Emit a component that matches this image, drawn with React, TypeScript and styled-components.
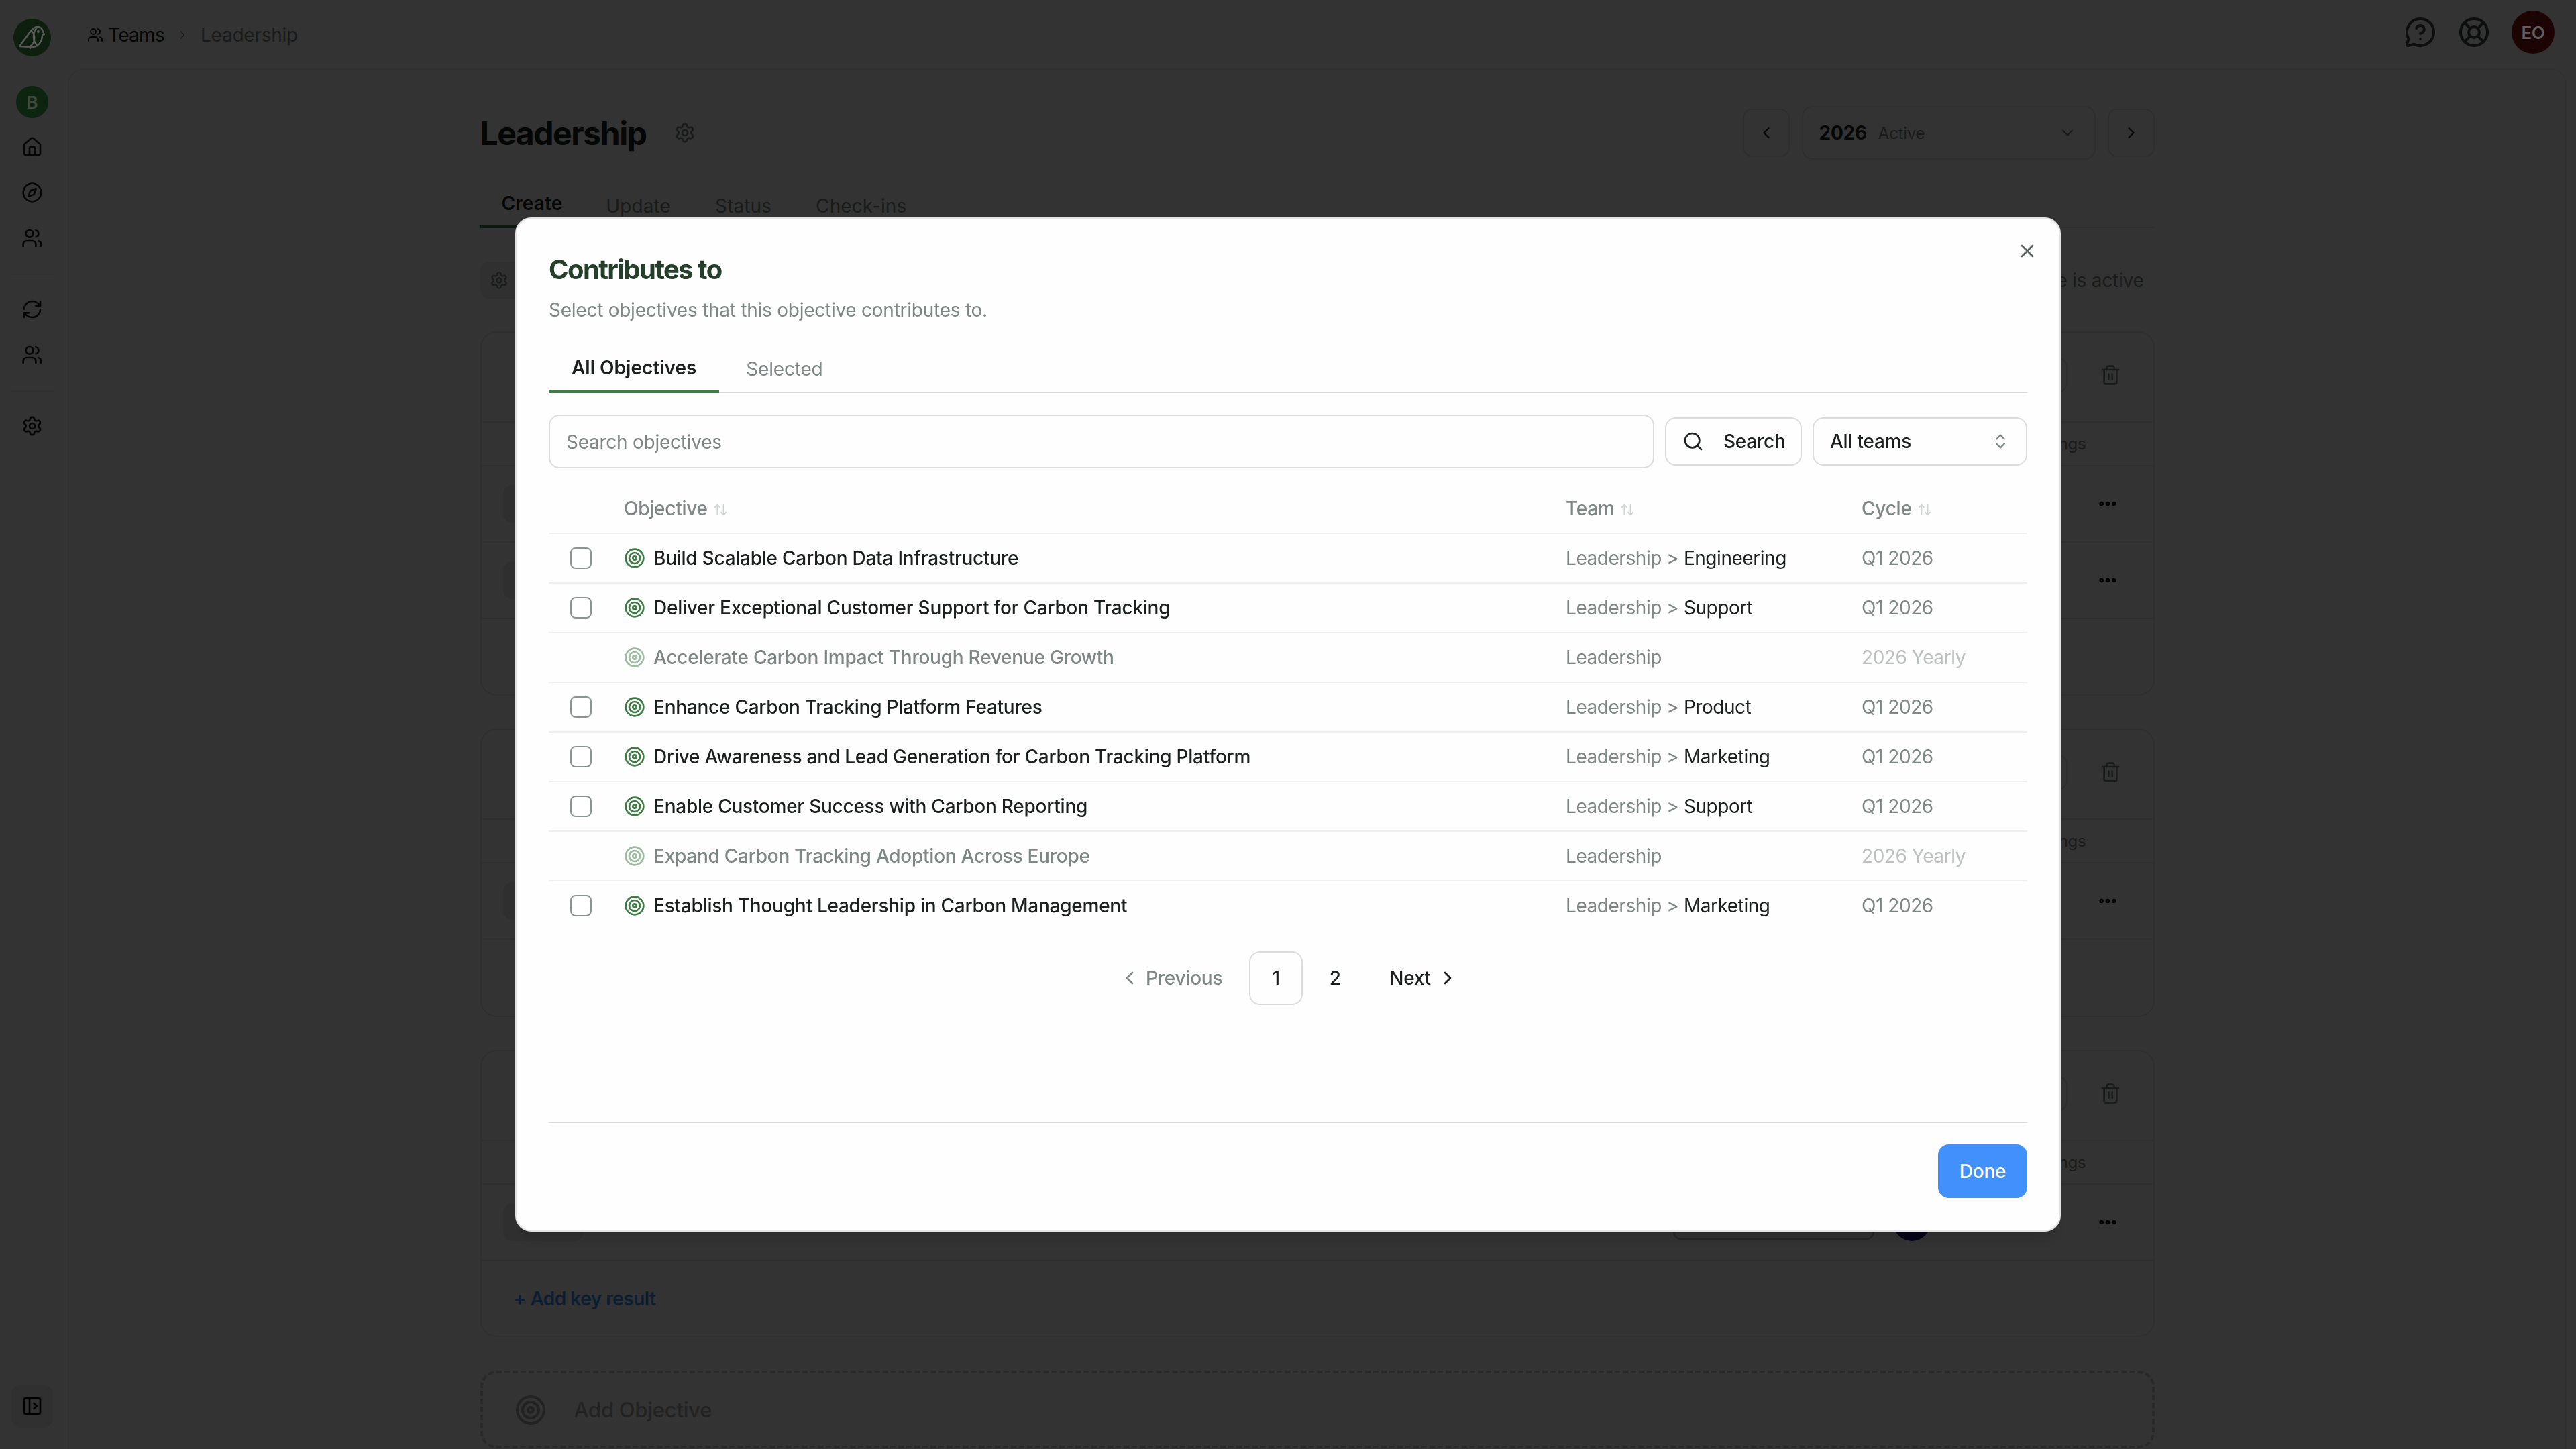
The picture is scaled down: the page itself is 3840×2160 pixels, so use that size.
import React from "react";
import styled, { createGlobalStyle } from "styled-components";
import {
  ArrowUpDown, ChevronDown, ChevronLeft, ChevronRight, ChevronsUpDown, Compass, Ellipsis, House,
  LifeBuoy, MessageCircleQuestion, PanelLeftOpen, RefreshCw, Search, Settings, Target, Trash2, Users, X,
} from "lucide-react";

const DARK = "#1b201f";
const GRAY = "#7e8785";
const LINE = "#e4e4e4";
const GREEN = "#3d7c42";

const Global = createGlobalStyle`
  html, body { margin: 0; padding: 0; background: #fff; }
  body { font-family: Inter, "Liberation Sans", sans-serif; color: ${DARK}; overflow: hidden; width: 3840px; height: 2160px; letter-spacing: -0.25px; }
  * { box-sizing: border-box; }
  svg { display: block; flex: none; }
`;

const Shell = styled.div`display: flex; width: 3840px; height: 2160px; overflow: hidden;`;

const Sidebar = styled.aside`
  width: 101px; flex: none; display: flex; flex-direction: column; align-items: center; padding: 28px 5px 0 0;
`;
const LogoMark = styled.div`
  position: relative; z-index: 20; width: 56px; height: 56px; border-radius: 50%; background: #0f1f0f;
`;
const TeamBadge = styled.div`
  position: relative; z-index: 20; width: 48px; height: 48px; margin-top: 44px; margin-bottom: 9px; border-radius: 50%;
  background: #0c2410; color: #3f4a3f; display: flex; align-items: center; justify-content: center;
  font-size: 26px; font-weight: 600;
`;
const NavItem = styled.div`height: 68px; display: flex; align-items: center; justify-content: center; width: 100%;`;
const NavDivider = styled.div`width: 64px; height: 2px; background: #ededed; margin: 19px 0 17px;`;
const Collapse = styled.div`
  margin-top: auto; margin-bottom: 32px; width: 62px; height: 64px; border-radius: 14px; background: #efefef;
  display: flex; align-items: center; justify-content: center;
`;

const Main = styled.div`flex: 1; min-width: 0; display: flex; flex-direction: column;`;
const TopBar = styled.header`
  height: 102px; flex: none; display: flex; align-items: center; justify-content: space-between;
  padding: 0 32px 6px 29px;
`;
const Crumbs = styled.nav`display: flex; align-items: center; font-size: 28px; margin-top: 8px;`;
const CrumbRoot = styled.span`display: flex; align-items: center; gap: 7px; color: ${DARK}; letter-spacing: -0.7px;`;
const CrumbSep = styled.span`margin: 0 17px; color: ${GRAY}; display: flex;`;
const CrumbLeaf = styled.span`color: ${GRAY};`;
const TopActions = styled.div`display: flex; align-items: center; gap: 32px; color: #44494a;`;
const UserBadge = styled.div`
  position: relative; z-index: 20; width: 64px; height: 64px; border-radius: 50%; background: #1c0404; color: #5f5f5f;
  display: flex; align-items: center; justify-content: center; font-size: 26px; font-weight: 600;
`;

const Panel = styled.main`
  flex: 1; min-height: 0; margin-right: 14px; border: 2px solid #f0f0f0; border-bottom: none;
  border-radius: 24px 24px 0 0; padding-top: 54px; display: flex; flex-direction: column; align-items: center; overflow: hidden;
`;
const Content = styled.div`width: 2496px; flex: none;`;
const PageHead = styled.div`display: flex; align-items: center; justify-content: space-between; height: 80px;`;
const TitleGroup = styled.div`display: flex; align-items: center; gap: 41px;`;
const PageTitle = styled.h1`margin: 0; font-size: 48px; font-weight: 700; letter-spacing: -0.03em; color: ${DARK};`;
const CycleNav = styled.div`display: flex; align-items: center; gap: 18px;`;
const CycleStep = styled.div`
  width: 70px; height: 72px; border: 2px solid ${LINE}; border-radius: 14px; display: flex; align-items: center; justify-content: center;
`;
const CycleSelect = styled.div`
  width: 438px; height: 80px; border: 2px solid ${LINE}; border-radius: 16px; display: flex; align-items: center;
  padding: 0 26px 0 24px; color: ${GRAY};
`;
const CycleYear = styled.span`font-size: 28px; font-weight: 700; color: ${DARK}; margin-right: 17px;`;
const CycleState = styled.span`font-size: 24px; flex: 1;`;
const PageTabs = styled.div`display: flex; margin-top: 30px; box-shadow: inset 0 -2px 0 ${LINE};`;
const PageTab = styled.div<{ $active?: boolean }>`
  height: 72px; padding: ${(p) => (p.$active ? "2px 32px 0" : "6px 33px 0")}; display: flex; align-items: center; font-size: 28px;
  letter-spacing: 0.1px;
  font-weight: ${(p) => (p.$active ? 600 : 400)}; color: ${(p) => (p.$active ? DARK : GRAY)};
  border-bottom: ${(p) => (p.$active ? `4px solid ${GREEN}` : "none")};
`;
const InfoRow = styled.div`display: flex; align-items: center; justify-content: space-between; height: 55px; margin-top: 50px;`;
const InfoGear = styled.div`
  width: 300px; height: 55px; border-radius: 12px; background: #ededed; display: flex; align-items: center; padding-left: 14px; color: ${GRAY};
`;
const InfoText = styled.span`font-size: 28px; color: ${GRAY}; padding-right: 16px;`;

const Stack = styled.div`display: flex; flex-direction: column; gap: 49px; margin-top: 49px;`;
const Card = styled.section<{ $height: number }>`
  height: ${(p) => p.$height}px; border: 2px solid #e8e8e8; border-radius: 24px; display: flex; flex-direction: column;
`;
const CardHead = styled.div`
  height: 134px; flex: none; border-bottom: 2px solid #e8e8e8; display: flex; align-items: center; justify-content: flex-end;
  padding: 0 48px 6px 0; gap: 48px; color: ${GRAY};
`;
const CardAction = styled.div`width: 300px; height: 52px; border: 2px solid ${LINE}; border-radius: 14px;`;
const SettingsRow = styled.div`
  height: 65px; flex: none; border-bottom: 2px solid #e8e8e8; display: flex; align-items: center; justify-content: flex-end;
  padding-right: 100px; font-size: 24px; color: ${GRAY};
`;
const ResultRow = styled.div`
  height: 114px; flex: none; border-bottom: 2px solid #e8e8e8; display: flex; align-items: center; padding: 0 52px 0 32px;
`;
const ResultChip = styled.div`width: 120px; height: 56px; border-radius: 14px; background: #ececec;`;
const ResultValue = styled.div`
  margin-left: auto; width: 300px; height: 52px; border: 2px solid #a9b4c9; border-radius: 12px; background: #eef0f5;
`;
const ResultOwner = styled.div`width: 56px; height: 56px; border-radius: 50%; background: #1a1070; margin: 0 248px 0 28px;`;
const AddRow = styled.div`
  flex: 1; display: flex; align-items: center; padding: 1px 0 0 48px; font-size: 28px; font-weight: 600; letter-spacing: -0.5px; color: #4190fb;
`;
const AddObjective = styled.div`
  height: 116px; margin-top: 50px; border: 4px dashed #cccccc; border-radius: 24px; display: flex; align-items: center;
  gap: 41px; padding: 1px 0 0 47px; font-size: 31px; font-weight: 500; color: #a8a8a8;
`;

const Overlay = styled.div`
  position: fixed; inset: 0; z-index: 10; background: rgba(0, 0, 0, 0.8);
  display: flex; align-items: center; justify-content: center;
`;
const Modal = styled.div`
  position: relative; width: 2304px; height: 1512px; background: #fefefe; border: 2px solid ${LINE}; border-radius: 24px;
  padding: 48px; display: flex; flex-direction: column; box-shadow: 0 20px 25px -5px rgba(0,0,0,.1), 0 8px 10px -6px rgba(0,0,0,.1);
`;
const Close = styled.div`position: absolute; top: 32px; right: 32px; color: #5c6160;`;
const ModalTitle = styled.h2`
  margin: 0; height: 56px; line-height: 56px; font-size: 40px; font-weight: 700; letter-spacing: -0.04em; color: #24402a;
`;
const ModalDesc = styled.p`margin: 12px 0 0; line-height: 40px; font-size: 28px; color: ${GRAY};`;
const ModalTabs = styled.div`display: flex; gap: 6px; margin-top: 32px; box-shadow: inset 0 -2px 0 #d9d9d9;`;
const ModalTab = styled.div<{ $active?: boolean }>`
  height: 72px; padding: 0 34px; display: flex; align-items: center; font-size: 28px;
  font-weight: ${(p) => (p.$active ? 600 : 400)}; color: ${(p) => (p.$active ? DARK : GRAY)};
  letter-spacing: ${(p) => (p.$active ? "0" : "-0.2px")};
  border-bottom: ${(p) => (p.$active ? `4px solid ${GREEN}` : "none")};
`;
const Toolbar = styled.div`display: flex; align-items: center; gap: 16px; margin-top: 32px;`;
const SearchField = styled.div`
  flex: 1; height: 80px; border: 2px solid #dcdcdc; border-radius: 16px; padding: 2px 24px 0; display: flex; align-items: center;
  font-size: 28px; color: ${GRAY};
`;
const SearchButton = styled.div`
  width: 204px; height: 72px; border: 2px solid #dcdcdc; border-radius: 16px; display: flex; align-items: center; gap: 29px;
  padding-left: 24px; font-size: 28px; font-weight: 500; color: ${DARK};
`;
const TeamSelect = styled.div`
  width: 320px; height: 72px; border: 2px solid #dcdcdc; border-radius: 16px; display: flex; align-items: center; justify-content: space-between;
  padding: 0 24px; font-size: 28px; font-weight: 500; color: ${DARK};
`;
const ObjectiveGrid = styled.div`display: grid; grid-template-columns: 112px 1404px 441px 1fr; align-items: center;`;
const HeadRow = styled(ObjectiveGrid)`
  height: 74px; margin-top: 24px; border-bottom: 2px solid #efefef; font-size: 28px; font-weight: 500; color: ${GRAY};
`;
const HeadCell = styled.div`display: flex; align-items: center; gap: 8px; color: ${GRAY};`;
const SortIcon = styled.span`color: #cfd3d2; display: flex; margin-top: 4px;`;
const Row = styled(ObjectiveGrid)`
  height: 74px; border-bottom: 2px solid #f0f0f0; font-size: 28px;
  &:last-child { height: 72px; border-bottom: none; }
`;
const CheckCell = styled.div`padding-left: 32px;`;
const Checkbox = styled.div`width: 32px; height: 32px; border: 2px solid #8c9492; border-radius: 8px; background: #fff;`;
const NameCell = styled.div<{ $off?: boolean }>`
  display: flex; align-items: center; gap: 12px; font-weight: 500; color: ${(p) => (p.$off ? GRAY : DARK)};
`;
const GoalIcon = styled.span<{ $off?: boolean }>`display: flex; color: ${GREEN}; opacity: ${(p) => (p.$off ? 0.5 : 1)};`;
const TeamCell = styled.div`color: ${GRAY}; letter-spacing: -0.45px;`;
const TeamLeaf = styled.span`color: ${DARK};`;
const CycleCell = styled.div<{ $off?: boolean }>`color: ${(p) => (p.$off ? "#bcc0bf" : GRAY)}; letter-spacing: -0.45px;`;
const Pager = styled.div`display: flex; justify-content: center; gap: 8px; margin-top: 32px; font-size: 28px; font-weight: 500;`;
const PagerStep = styled.div<{ $off?: boolean; $next?: boolean }>`
  height: 80px; display: flex; align-items: center; gap: ${(p) => (p.$next ? 9 : 8)}px; color: ${(p) => (p.$off ? GRAY : DARK)};
  padding: ${(p) => (p.$next ? "0 20px 0 33px" : "0 32px 0 22px")};
`;
const PageNumber = styled.div<{ $current?: boolean }>`
  width: 80px; height: 80px; border-radius: 16px; display: flex; align-items: center; justify-content: center;
  border: 2px solid ${(p) => (p.$current ? "#dcdcdc" : "transparent")};
`;
const ModalFooter = styled.div`
  margin-top: auto; border-top: 2px solid #dcdcdc; padding-top: 32px; display: flex; justify-content: flex-end;
`;
const DoneButton = styled.div`
  width: 133px; height: 80px; border-radius: 16px; background: #4190fb; color: #fff; display: flex; align-items: center; justify-content: center;
  font-size: 28px; font-weight: 500;
`;

const Bird = () => (
  <svg width="56" height="56" viewBox="0 0 56 56" fill="none" stroke="#5a5a5a" strokeWidth="2.4" strokeLinejoin="round" strokeLinecap="round">
    <path d="M9 41 L26 18 C29 14 33 12 36 12 C40 12 43 15 44 19 L46 23 L43 24 C43 33 38 41 29 42 Z" />
    <path d="M27 18 C33 24 33 35 25 41" />
    <path d="M35 13 C28 21 28 33 36 40" />
    <circle cx="37" cy="19" r="0.8" />
    <path d="M25 42 v2" />
  </svg>
);

type Goal = { name: string; leaf?: string; cycle: string; off?: boolean };
const goals: Goal[] = [
  { name: "Build Scalable Carbon Data Infrastructure", leaf: "Engineering", cycle: "Q1 2026" },
  { name: "Deliver Exceptional Customer Support for Carbon Tracking", leaf: "Support", cycle: "Q1 2026" },
  { name: "Accelerate Carbon Impact Through Revenue Growth", cycle: "2026 Yearly", off: true },
  { name: "Enhance Carbon Tracking Platform Features", leaf: "Product", cycle: "Q1 2026" },
  { name: "Drive Awareness and Lead Generation for Carbon Tracking Platform", leaf: "Marketing", cycle: "Q1 2026" },
  { name: "Enable Customer Success with Carbon Reporting", leaf: "Support", cycle: "Q1 2026" },
  { name: "Expand Carbon Tracking Adoption Across Europe", cycle: "2026 Yearly", off: true },
  { name: "Establish Thought Leadership in Carbon Management", leaf: "Marketing", cycle: "Q1 2026" },
];

const BackCard = ({ results, height }: { results: number; height: number }) => (
  <Card $height={height}>
    <CardHead>
      <CardAction />
      <Trash2 size={32} />
    </CardHead>
    <SettingsRow>Settings</SettingsRow>
    {Array.from({ length: results }).map((_, i) => (
      <ResultRow key={i}>
        <ResultChip />
        <ResultValue />
        <ResultOwner />
        <Ellipsis size={32} color="#000" strokeWidth={3} />
      </ResultRow>
    ))}
    <AddRow>+ Add key result</AddRow>
  </Card>
);

export default function App() {
  return (
    <>
      <Global />
      <Shell>
        <Sidebar>
          <LogoMark><Bird /></LogoMark>
          <TeamBadge>B</TeamBadge>
          <NavItem><House size={32} /></NavItem>
          <NavItem><Compass size={32} /></NavItem>
          <NavItem><Users size={32} /></NavItem>
          <NavDivider />
          <NavItem><RefreshCw size={32} /></NavItem>
          <NavItem><Users size={32} /></NavItem>
          <NavDivider />
          <NavItem><Settings size={32} /></NavItem>
          <Collapse><PanelLeftOpen size={32} color="#000" /></Collapse>
        </Sidebar>
        <Main>
          <TopBar>
            <Crumbs>
              <CrumbRoot><Users size={24} />Teams</CrumbRoot>
              <CrumbSep><ChevronRight size={20} /></CrumbSep>
              <CrumbLeaf>Leadership</CrumbLeaf>
            </Crumbs>
            <TopActions>
              <MessageCircleQuestion size={48} />
              <LifeBuoy size={48} />
              <UserBadge>EO</UserBadge>
            </TopActions>
          </TopBar>
          <Panel>
            <Content>
              <PageHead>
                <TitleGroup>
                  <PageTitle>Leadership</PageTitle>
                  <Settings size={32} color={GRAY} />
                </TitleGroup>
                <CycleNav>
                  <CycleStep><ChevronLeft size={28} /></CycleStep>
                  <CycleSelect>
                    <CycleYear>2026</CycleYear>
                    <CycleState>Active</CycleState>
                    <ChevronDown size={28} />
                  </CycleSelect>
                  <CycleStep><ChevronRight size={28} /></CycleStep>
                </CycleNav>
              </PageHead>
              <PageTabs>
                <PageTab $active>Create</PageTab>
                <PageTab>Update</PageTab>
                <PageTab>Status</PageTab>
                <PageTab>Check-ins</PageTab>
              </PageTabs>
              <InfoRow>
                <InfoGear><Settings size={28} /></InfoGear>
                <InfoText>This cycle is active</InfoText>
              </InfoRow>
              <Stack>
                <BackCard results={2} height={543} />
                <BackCard results={1} height={430} />
                <BackCard results={1} height={428} />
              </Stack>
              <AddObjective><Target size={48} />Add Objective</AddObjective>
            </Content>
          </Panel>
        </Main>
      </Shell>
      <Overlay>
        <Modal>
          <Close><X size={32} /></Close>
          <ModalTitle>Contributes to</ModalTitle>
          <ModalDesc>Select objectives that this objective contributes to.</ModalDesc>
          <ModalTabs>
            <ModalTab $active>All Objectives</ModalTab>
            <ModalTab>Selected</ModalTab>
          </ModalTabs>
          <Toolbar>
            <SearchField>Search objectives</SearchField>
            <SearchButton><Search size={32} />Search</SearchButton>
            <TeamSelect>All teams<ChevronsUpDown size={28} color={GRAY} /></TeamSelect>
          </Toolbar>
          <HeadRow>
            <div />
            <HeadCell>Objective<SortIcon><ArrowUpDown size={22} /></SortIcon></HeadCell>
            <HeadCell>Team<SortIcon><ArrowUpDown size={22} /></SortIcon></HeadCell>
            <HeadCell>Cycle<SortIcon><ArrowUpDown size={22} /></SortIcon></HeadCell>
          </HeadRow>
          <div>
            {goals.map((g) => (
              <Row key={g.name}>
                <CheckCell>{!g.off && <Checkbox />}</CheckCell>
                <NameCell $off={g.off}>
                  <GoalIcon $off={g.off}><Target size={32} /></GoalIcon>
                  {g.name}
                </NameCell>
                <TeamCell>
                  Leadership{g.leaf && <> &gt; <TeamLeaf>{g.leaf}</TeamLeaf></>}
                </TeamCell>
                <CycleCell $off={g.off}>{g.cycle}</CycleCell>
              </Row>
            ))}
          </div>
          <Pager>
            <PagerStep $off><ChevronLeft size={32} />Previous</PagerStep>
            <PageNumber $current>1</PageNumber>
            <PageNumber>2</PageNumber>
            <PagerStep $next>Next<ChevronRight size={32} /></PagerStep>
          </Pager>
          <ModalFooter><DoneButton>Done</DoneButton></ModalFooter>
        </Modal>
      </Overlay>
    </>
  );
}
